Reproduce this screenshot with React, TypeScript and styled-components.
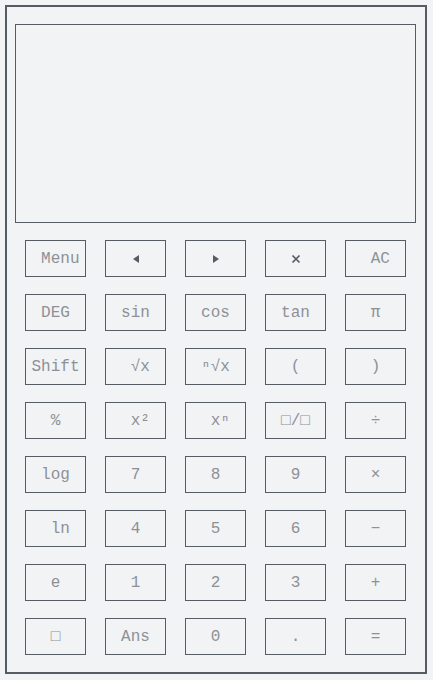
import React from "react";
import styled, { createGlobalStyle } from "styled-components";

const Global = createGlobalStyle`
  html, body { margin: 0; padding: 0; background: #f2f3f5; }
  body { font-family: "Liberation Mono", monospace; }
`;

const Shell = styled.div`
  box-sizing: border-box;
  margin: 5px 0 0 5px;
  width: 422px;
  height: 669px;
  border: 2px solid #555c64;
  padding: 17px 9px 17px 8px;
  display: flex;
  flex-direction: column;
  gap: 17px;
`;

const Display = styled.div`
  box-sizing: border-box;
  width: 401px;
  height: 199px;
  border: 1px solid #555c64;
`;

const Keypad = styled.div`
  display: grid;
  grid-template-columns: repeat(5, 61px);
  grid-auto-rows: 37px;
  column-gap: 19px;
  row-gap: 17px;
  padding: 0 10px;
`;

const Key = styled.button<{ $dark?: boolean }>`
  box-sizing: border-box;
  margin: 0;
  padding: 1px 0 0;
  border: 1px solid #555c64;
  border-radius: 0;
  background: transparent;
  display: flex;
  align-items: center;
  justify-content: center;
  font-family: "Liberation Mono", "DejaVu Sans Mono", monospace;
  font-size: 16px;
  white-space: pre;
  color: ${(p) => (p.$dark ? "#555c64" : "#8d9195")};
`;

const Tri = ({ dir }: { dir: "l" | "r" }) => (
  <svg width="6" height="8" viewBox="0 0 6 8">
    {dir === "l" ? <polygon points="6,0 6,8 0,4" fill="#555c64" /> : <polygon points="0,0 0,8 6,4" fill="#555c64" />}
  </svg>
);

const Cross = () => (
  <svg width="10" height="10" viewBox="0 0 10 10">
    <path d="M1.5 1.5 L8.5 8.5 M8.5 1.5 L1.5 8.5" stroke="#555c64" strokeWidth="1.7" />
  </svg>
);

const keys: React.ReactNode[] = [
  " Menu", <Tri dir="l" />, <Tri dir="r" />, <Cross />, " AC",
  "DEG", "sin", "cos", "tan", "π",
  "Shift", " √x", "ⁿ√x", "(", ")",
  "%", " x²", " xⁿ", "□/□", "÷",
  "log", "7", "8", "9", "×",
  " ln", "4", "5", "6", "−",
  "e", "1", "2", "3", "+",
  "□", "Ans", "0", ".", "=",
];

export default function App() {
  return (
    <>
      <Global />
      <Shell>
        <Display />
        <Keypad>
          {keys.map((k, i) => (
            <Key key={i} $dark={typeof k !== "string"}>
              {k}
            </Key>
          ))}
        </Keypad>
      </Shell>
    </>
  );
}
